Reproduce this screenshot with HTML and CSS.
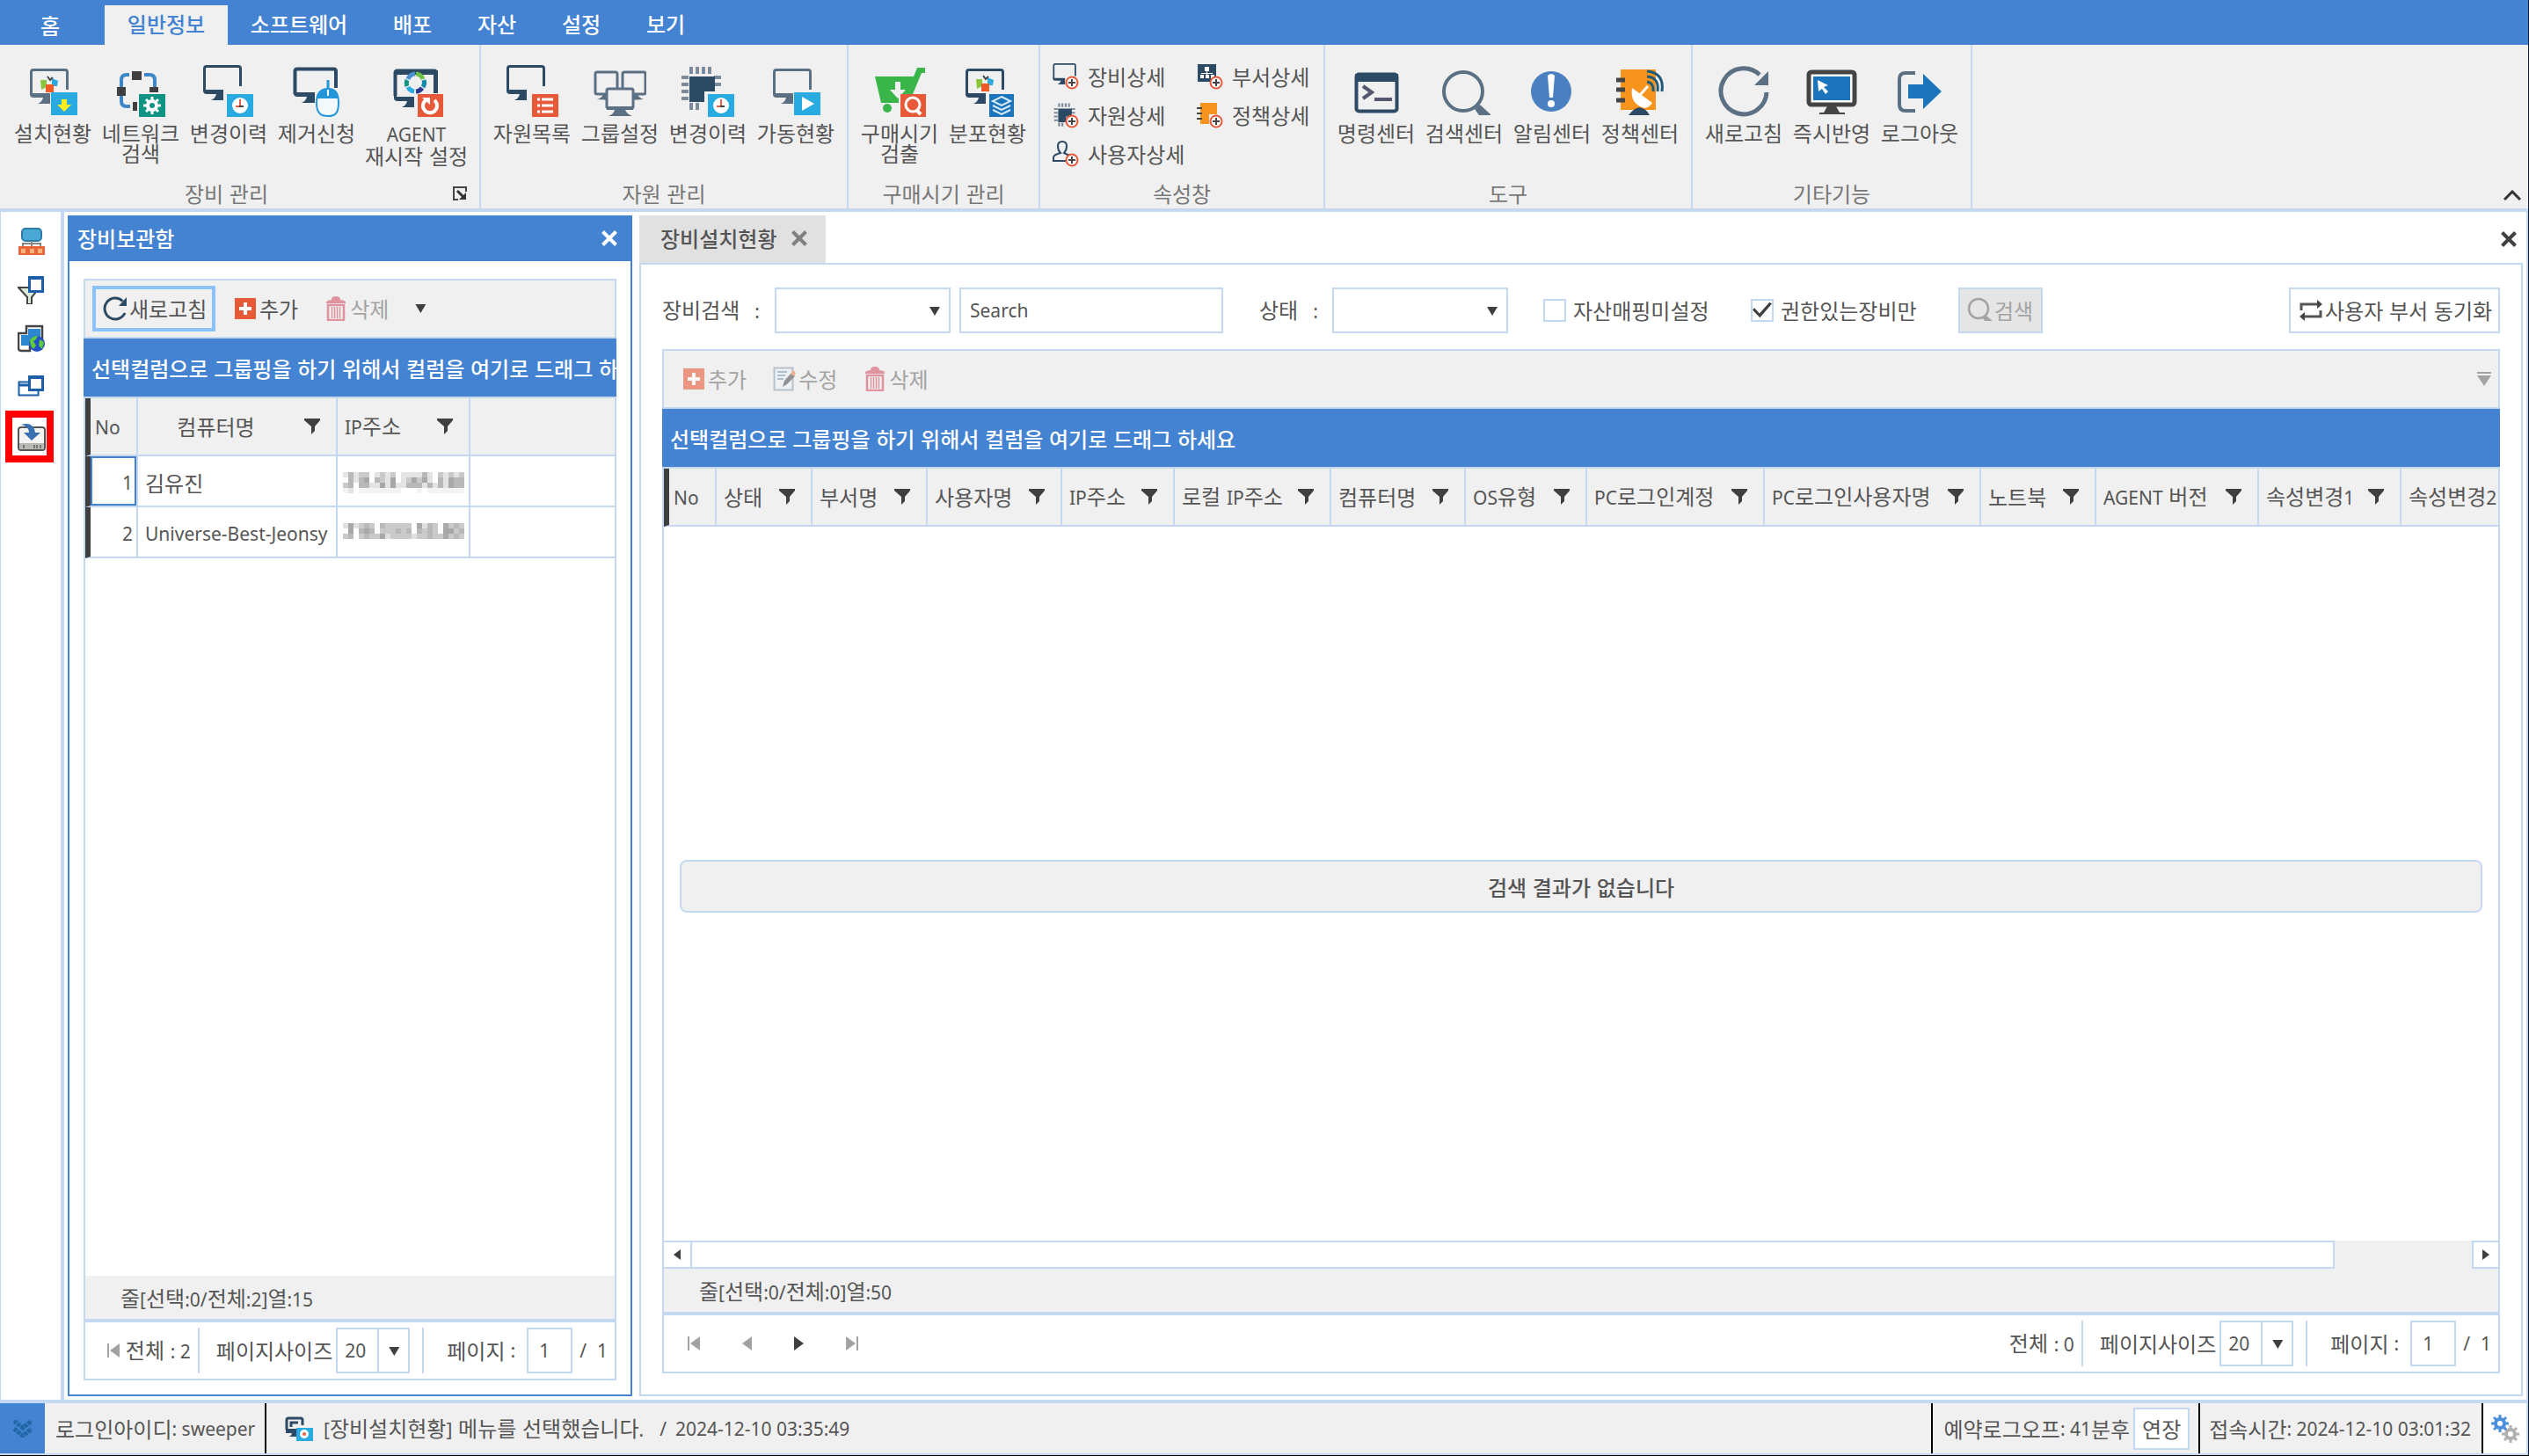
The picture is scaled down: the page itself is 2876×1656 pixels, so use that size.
FILE: index.html
```html
<!DOCTYPE html>
<html lang="ko">
<head>
<meta charset="utf-8">
<title>장비설치현황</title>
<link rel="stylesheet" href="styles.css">
</head>
<body>
<svg class="defs" aria-hidden="true">
  <symbol id="monitor" viewBox="0 0 60 60">
    <path d="M46.500 29V9q0-2.500-2.500-2.500H8Q5.500 6.500 5.500 9v26" fill="none" stroke="currentColor" stroke-width="3"/>
    <path d="M4 33h23v12H13q5-2 6-7H8q-4 0-4-4z" fill="currentColor"/>
  </symbol>
  <symbol id="clock" viewBox="0 0 30 26">
    <path d="M0 0h30v26H0z" fill="#29abe2"/><circle cx="15" cy="13" r="9" fill="#fff"/>
    <path d="M15 6v8M10 14h5" stroke="#e6604a" stroke-width="2"/><path d="M14 14h5" stroke="#444" stroke-width="2"/>
  </symbol>
  <symbol id="tiles" viewBox="0 0 24 22">
    <path d="M2 6h7v8l-6 3z" fill="#8cc63f"/><path d="M15 4l7 3-1 6h-6z" fill="#29abe2"/><path d="M8 11h9v9H8z" fill="#f15a24"/><path d="M10 2l3 4 3-3" fill="none" stroke="#444" stroke-width="2"/>
  </symbol>
  <symbol id="chip" viewBox="0 0 60 60">
    <path d="M14 3v8M21 3v8M28 3v8M35 3v8M14 44v8M21 44v8M3 15h8M3 23h8M3 31h8M3 39h8M40 15h8M40 23h8" stroke="#7b8b9b" stroke-width="4"/>
    <path d="M12 14h29v17H29v12H12z" fill="#2c4a63"/>
  </symbol>
  <symbol id="plus-mark" viewBox="0 0 16 16">
    <circle cx="8" cy="8" r="6.500" fill="#fff" stroke="#e8593a" stroke-width="2"/><path d="M8 4v8M4 8h8" stroke="#444" stroke-width="2"/>
  </symbol>
  <symbol id="refresh" viewBox="0 0 30 30">
    <path d="M26 20a12 12 0 1 1-2.500-13.500" fill="none" stroke="currentColor" stroke-width="3"/><path d="M28 2v10h-9z" fill="currentColor"/>
  </symbol>
  <symbol id="add" viewBox="0 0 26 26"><path d="M1 1h24v24H1z" fill="#e8593a"/><path d="M13 6v14M6 13h14" stroke="#fff" stroke-width="4"/></symbol>
  <symbol id="trash" viewBox="0 0 26 28">
    <path d="M2 8V6q3-2 6-2 0-4 5-4t5 4q3 0 6 2v2z" fill="#d4576a"/><path d="M4 10h18v17H4z" fill="none" stroke="#d4576a" stroke-width="2.500"/><path d="M8.500 12v13M11.500 12v13M14.500 12v13M17.500 12v13" stroke="#d4576a" stroke-width="1.500"/>
  </symbol>
  <symbol id="edit" viewBox="0 0 26 28">
    <path d="M1.500 1.500h21v25h-21z" fill="#eef3f7" stroke="#8fa3b3" stroke-width="2"/><path d="M5 6h11M5 10h9M5 14h7" stroke="#7d9db8" stroke-width="2"/><path d="M11 23l2-7 8-9 4 4-9 9z" fill="#555"/><path d="M20 8l3-4 3 3-2 4z" fill="#e8874a"/>
  </symbol>
  <symbol id="funnel" viewBox="0 0 18 18"><path d="M0 0h18v2l-6 7v5l-4 4V9L0 2z" fill="#3f3f3f"/></symbol>
  <symbol id="lens" viewBox="0 0 30 30"><circle cx="13" cy="13" r="11" fill="none" stroke="currentColor" stroke-width="2.500"/><path d="M18 24l4-3 7 6h-9z" fill="currentColor"/></symbol>
  <symbol id="cross" viewBox="0 0 20 20"><path d="M2.500 2.500l15 15M17.500 2.500l-15 15" stroke="currentColor" stroke-width="4"/></symbol>
  <symbol id="first" viewBox="0 0 14 16"><path d="M1 0v16" stroke="currentColor" stroke-width="2"/><path d="M14 0v16L3 8z" fill="currentColor"/></symbol>
  <symbol id="gear" viewBox="0 0 20 20">
    <circle cx="10" cy="10" r="5" fill="none" stroke="currentColor" stroke-width="4"/><path d="M10 0v4M10 16v4M0 10h4M16 10h4M3 3l3 3M14 14l3 3M3 17l3-3M14 6l3-3" stroke="currentColor" stroke-width="3"/>
  </symbol>
</svg>

<div class="app">
  <nav class="tabs">
    <button class="tab home">홈</button>
    <button class="tab active">일반정보</button>
    <button class="tab wide">소프트웨어</button>
    <button class="tab">배포</button>
    <button class="tab">자산</button>
    <button class="tab">설정</button>
    <button class="tab">보기</button>
  </nav>

  <div class="ribbon">
    <section class="group">
      <div class="tools">
        <button class="tool"><svg class="big slate" viewBox="0 0 60 60"><use href="#monitor"/><use href="#tiles" x="14" y="12" width="24" height="22"/><path d="M28 32h30v26H28z" fill="#29abe2"/><path d="M40 40h6v6h5l-8 8-8-8h5z" fill="#fcee21"/></svg><span>설치현황</span></button>
        <button class="tool"><svg class="big" viewBox="0 0 60 60"><path d="M17 12h-3q-6 0-6 6v24q0 6 6 6h4M34 12h6q6 0 6 6v10" fill="none" stroke="#3c87c8" stroke-width="4"/><path d="M20 8h11v10H20zM3 26h10v10H3zM40 26h10v6H40zM21 43h5v10h-5z" fill="#404040"/><path d="M28 34h30v26H28z" fill="#0f9384"/><use href="#gear" x="33" y="37" width="20" height="20" color="#fff"/></svg><span>네트워크<br>검색</span></button>
        <button class="tool"><svg class="big navy" viewBox="0 0 60 60"><use href="#monitor" x="-3" y="-4"/><use href="#clock" x="28" y="34" width="30" height="26"/></svg><span>변경이력</span></button>
        <button class="tool"><svg class="big navy" viewBox="0 0 60 60"><path d="M52 27V8q0-2.500-2.500-2.500H8Q5.500 5.500 5.500 8v26" fill="none" stroke="currentColor" stroke-width="4"/><path d="M4 32h24v12H13q5-2 6-7H8q-4 0-4-4z" fill="currentColor"/><path d="M30 44c0-12 5-16 13-16s12 4 12 16-4 15-12 15-13-3-13-15z" fill="#f4f9fc" stroke="#2396d9" stroke-width="2"/><path d="M30 39c1-8 6-11 13-11s11 4 12 11z" fill="#2396d9"/><path d="M43 18v10" stroke="#2396d9" stroke-width="3"/><path d="M43 29v7" stroke="#fff" stroke-width="2"/></svg><span>제거신청</span></button>
        <button class="tool long"><svg class="big navy" viewBox="0 0 60 60"><path d="M52 32V10q0-2.500-2.500-2.500H8Q5.500 7.500 5.500 10v26" fill="none" stroke="currentColor" stroke-width="4"/><use href="#monitor" y="4"/><path d="M40 7h14v26h-5V12h-9z" fill="currentColor"/><path d="M8 12h40v22H8z" fill="#f0f0f0"/><g fill="none" stroke-width="5"><path d="M20 17a9 9 0 0 1 8-6" stroke="#4a90d0"/><path d="M29 11a9 9 0 0 1 8 6" stroke="#6cbf45"/><path d="M38 18a9 9 0 0 1-1 8" stroke="#0f8ba8"/><path d="M36 27a9 9 0 0 1-7 4" stroke="#2b3990"/><path d="M27 31a9 9 0 0 1-7-5" stroke="#29abe2"/><path d="M19 25a9 9 0 0 1 0-7" stroke="#0f9384"/></g><path d="M31 34h29v26H31z" fill="#e8593a"/><path d="M40 41a8 8 0 1 0 10 0" fill="none" stroke="#fff" stroke-width="4"/><path d="M36 38h9v8z" fill="#fff"/></svg><span><span class="en">AGENT</span><br>재시작 설정</span></button>
      </div>
      <div class="caption"><span>장비 관리</span><button class="launch" aria-label="장비 관리 옵션"><svg viewBox="0 0 16 16"><path d="M6 15H1V1h14v5" fill="none" stroke="#444" stroke-width="2"/><path d="M5 5l7 7" stroke="#333" stroke-width="3"/><path d="M15 7v8H7z" fill="#333"/></svg></button></div>
    </section>
    <section class="group">
      <div class="tools">
        <button class="tool"><svg class="big navy" viewBox="0 0 60 60"><use href="#monitor" x="-3" y="-4"/><path d="M30 34h30v26H30z" fill="#e8593a"/><path d="M36 40h3M36 47h3M36 54h3M41 40h13M41 47h13M41 54h13" stroke="#fff" stroke-width="3"/></svg><span>자원목록</span></button>
        <button class="tool"><svg class="big slate" viewBox="0 0 60 60"><g fill="#f0f0f0" stroke="currentColor" stroke-width="3"><rect x="2" y="9" width="25" height="25" rx="2"/><rect x="33" y="9" width="26" height="25" rx="2"/></g><path d="M4 40q6-2 7-6h8v7zM57 40q-6-2-7-6h-8v7z" fill="currentColor"/><rect x="15" y="28" width="30" height="22" rx="2" fill="#f0f0f0" stroke="currentColor" stroke-width="3"/><path d="M15 48h30v4h-9q2 5 8 7H17q6-2 7-7h-9z" fill="currentColor"/></svg><span>그룹설정</span></button>
        <button class="tool"><svg class="big" viewBox="0 0 60 60"><use href="#chip" x="-3"/><use href="#clock" x="30" y="34" width="30" height="26"/></svg><span>변경이력</span></button>
        <button class="tool"><svg class="big slate" viewBox="0 0 60 60"><use href="#monitor"/><path d="M28 32h30v26H28z" fill="#29abe2"/><path d="M37 37l14 8-14 8z" fill="#fff"/></svg><span>가동현황</span></button>
      </div>
      <div class="caption"><span>자원 관리</span></div>
    </section>
    <section class="group">
      <div class="tools">
        <button class="tool"><svg class="big" viewBox="0 0 60 60"><path d="M2 14h44l4-10h9v6h-4L45 34H29v10H9z" fill="#39b54a"/><path d="M25 20h6v9h6l-9 10-9-10h6z" fill="#f0f0f0"/><circle cx="16" cy="50" r="5" fill="#39b54a"/><path d="M31 34h29v26H31z" fill="#e8593a"/><circle cx="45" cy="46" r="8" fill="none" stroke="#fff" stroke-width="3"/><path d="M49 52l5 5" stroke="#fff" stroke-width="4"/></svg><span>구매시기<br>검출</span></button>
        <button class="tool"><svg class="big navy" viewBox="0 0 60 60"><use href="#monitor" x="1"/><use href="#tiles" x="15" y="11" width="24" height="22"/><path d="M32 34h28v26H32z" fill="#1c75bc"/><path d="M46 37l10 5-10 5-10-5zM36 47l10 5 10-5M36 52l10 5 10-5" fill="none" stroke="#d8ecfa" stroke-width="2"/></svg><span>분포현황</span></button>
      </div>
      <div class="caption"><span>구매시기 관리</span></div>
    </section>
    <section class="group details">
      <div class="links">
        <button class="link"><svg viewBox="0 0 30 30"><use href="#monitor" class="navy" width="36" height="36" x="-2" y="-3"/><use href="#plus-mark" x="14" y="14" width="16" height="16"/></svg>장비상세</button>
        <button class="link"><svg viewBox="0 0 30 30"><path d="M1 1h21v20H1z" fill="#2c4a63"/><path d="M9 4h5v5H9zM4 13h4v4H4zM10 13h4v4h-4zM16 13h4v4h-4zM11 9h1v4h-1zM5 11h13v1H5z" fill="#fff"/><use href="#plus-mark" x="14" y="14" width="16" height="16"/></svg>부서상세</button>
        <button class="link"><svg viewBox="0 0 30 30"><use href="#chip" width="32" height="32"/><use href="#plus-mark" x="14" y="14" width="16" height="16"/></svg>자원상세</button>
        <button class="link"><svg viewBox="0 0 30 30"><path d="M4 1h19v13h-9v11H4z" fill="#f7941e"/><path d="M0 7h6M0 13h6M0 19h6" stroke="#444" stroke-width="2"/><use href="#plus-mark" x="14" y="14" width="16" height="16"/></svg>정책상세</button>
        <button class="link"><svg viewBox="0 0 30 30"><path d="M20 23H1v-4q0-3 8-5-3-3-3-8 0-5 5-5t5 5q0 5-3 8l6 3" fill="none" stroke="#2c4a63" stroke-width="2"/><use href="#plus-mark" x="14" y="14" width="16" height="16"/></svg>사용자상세</button>
      </div>
      <div class="caption"><span>속성창</span></div>
    </section>
    <section class="group">
      <div class="tools">
        <button class="tool"><svg class="big" viewBox="0 0 60 60"><rect x="7.500" y="11.500" width="46" height="42" rx="3" fill="none" stroke="#2c4a63" stroke-width="4"/><path d="M6 11h49v9H6z" fill="#2c4a63"/><path d="M15 25l10 7-10 7" fill="none" stroke="#55566f" stroke-width="4"/><path d="M28 40h20" stroke="#55566f" stroke-width="4"/></svg><span>명령센터</span></button>
        <button class="tool"><svg class="big slate" viewBox="0 0 60 60"><circle cx="29" cy="31" r="22" fill="none" stroke="currentColor" stroke-width="4"/><path d="M42 51l6-5 13 12H47z" fill="currentColor"/></svg><span>검색센터</span></button>
        <button class="tool"><svg class="big" viewBox="0 0 60 60"><circle cx="29" cy="31" r="23" fill="#4a7fc1"/><path d="M25 13q4-4 8 0l-2 25h-4z" fill="#fff"/><circle cx="29" cy="45" r="4" fill="#fff"/></svg><span>알림센터</span></button>
        <button class="tool"><svg class="big" viewBox="0 0 60 60"><path d="M8 6h40v46H8z" fill="#f7941e"/><path d="M3 18h10M3 29h10M3 41h10" stroke="#444" stroke-width="5"/><path d="M21 27q-3 18 14 23 6-1 9-6z" fill="#fff"/><path d="M30 35l9-10" stroke="#fff" stroke-width="3"/><path d="M17 58q6-8 12-9 8 1 12 9z" fill="#2c4a63"/><path d="M38 20q8 1 7 11M38 14q14 1 12 17M38 8q20 2 17 23" fill="none" stroke="#1f5a78" stroke-width="3"/></svg><span>정책센터</span></button>
      </div>
      <div class="caption"><span>도구</span></div>
    </section>
    <section class="group">
      <div class="tools">
        <button class="tool"><svg class="big slate" viewBox="0 0 60 60"><path d="M56 32A26 26 0 1 1 48 12" fill="none" stroke="currentColor" stroke-width="5"/><path d="M58 8v16H42z" fill="currentColor"/></svg><span>새로고침</span></button>
        <button class="tool"><svg class="big" viewBox="0 0 60 60"><rect x="4" y="9" width="52" height="37" rx="3" fill="#fff" stroke="#444" stroke-width="5"/><path d="M9 14h42v27H9z" fill="#1c75bc"/><path d="M14 18l12 6-5 2 5 5-3 3-4-6-4 3z" fill="#fff"/><path d="M25 48h10l4 7h6v2H16v-2h5z" fill="#444"/></svg><span>즉시반영</span></button>
        <button class="tool"><svg class="big slate" viewBox="0 0 60 60"><path d="M25 10H14q-7 0-7 7v29q0 7 7 7h11" fill="none" stroke="currentColor" stroke-width="4"/><path d="M17 23h17V11l21 20-21 20V39H17z" fill="#1c75bc"/></svg><span>로그아웃</span></button>
      </div>
      <div class="caption"><span>기타기능</span></div>
    </section>
    <button class="fold" aria-label="리본 접기"><svg viewBox="0 0 20 12"><path d="M1 11l9-9 9 9" fill="none" stroke="#333" stroke-width="3"/></svg></button>
  </div>

  <div class="work">
    <aside class="rail">
      <button aria-label="부서 트리"><svg viewBox="0 0 32 32"><rect x="5" y="1" width="22" height="14" rx="4" fill="#4aa8d4" stroke="#2c7ca8" stroke-width="2"/><path d="M16 15v6M6 21v-3h20v3" fill="none" stroke="#888" stroke-width="2"/><path d="M1 21h30v10H1z" fill="#e8653a"/><path d="M4 24h5v5H4zM14 24h5v5h-5zM23 24h5v5h-5z" fill="#f9b27c"/></svg></button>
      <button aria-label="필터"><svg viewBox="0 0 32 32"><path d="M1 13h24l-9 11v8h-5v-8z" fill="#dcebdc" stroke="#444" stroke-width="2"/><path d="M13.500 1.500h15v16h-15z" fill="#fff" stroke="#1c5fa8" stroke-width="3"/><path d="M12 0h18v4H12z" fill="#1c5fa8"/></svg></button>
      <button aria-label="네트워크"><svg viewBox="0 0 32 32"><path d="M10 2h18v20H14v8H4q-3 0-3-3V10h9z" fill="#fff" stroke="#444" stroke-width="2.500"/><path d="M12 5h14v10H12zM4 12h16v12H4z" fill="#2c86d0"/><circle cx="22" cy="22" r="9" fill="#2350c8"/><path d="M14 18q3-5 9-5-2 5-5 6l3 5-3 4q-4-3-4-10zM25 17l5 3-2 8-4-4z" fill="#5fca3a"/></svg></button>
      <button aria-label="창"><svg viewBox="0 0 32 32"><path d="M1.500 10.500h22v15h-22z" fill="#fff" stroke="#1c5fa8" stroke-width="2"/><path d="M1 14h12" stroke="#1c5fa8" stroke-width="3"/><path d="M13.500 4.500h15v15h-15z" fill="#fff" stroke="#1c5fa8" stroke-width="3"/><path d="M12 3h18v4H12z" fill="#1c5fa8"/></svg></button>
      <button class="marked" aria-label="장비보관함"><svg viewBox="0 0 32 32"><rect x="1" y="5" width="30" height="26" rx="3" fill="#f4f4f2" stroke="#555" stroke-width="2"/><path d="M2 23h28v7H2z" fill="#b8b8b4"/><path d="M7 25v4M19 25v4M22 25v4M26 25v4" stroke="#777" stroke-width="2"/><path d="M4 2q14-4 16 9h6L16 20 7 11h6Q13 4 4 2z" fill="#3a70b0"/></svg></button>
    </aside>

    <section class="side">
      <header class="side-head"><h2>장비보관함</h2><button aria-label="닫기"><svg viewBox="0 0 20 20"><use href="#cross"/></svg></button></header>
      <div class="side-body">
        <div class="bar">
          <button class="act focus"><svg class="navy" viewBox="0 0 30 30"><use href="#refresh"/></svg>새로고침</button>
          <button class="act"><svg viewBox="0 0 26 26"><use href="#add"/></svg>추가</button>
          <button class="act" disabled><svg viewBox="0 0 26 28"><use href="#trash"/></svg>삭제</button>
          <button class="more" aria-label="더보기"><i class="down"></i></button>
        </div>
        <div class="drop">선택컬럼으로 그룹핑을 하기 위해서 컬럼을 여기로 드래그 하세요</div>
        <div class="grid">
          <table>
            <colgroup><col class="w60"><col class="w227"><col class="w151"><col></colgroup>
            <thead><tr>
              <th class="no"><span class="en">No</span></th>
              <th><div class="hd mid"><span>컴퓨터명</span><svg><use href="#funnel"/></svg></div></th>
              <th><div class="hd"><span><span class="en">IP</span>주소</span><svg><use href="#funnel"/></svg></div></th>
              <th></th>
            </tr></thead>
            <tbody>
              <tr><td class="no sel en">1</td><td>김유진</td><td><svg class="mosaic" viewBox="0 0 23 4"><path stroke="#e4e4e4" d="M0 .5h1M2 .5h1M6 .5h1M8 .5h1M11 .5h4M16 .5h1M19 .5h1M21 .5h1M2 1.500h1M8 1.500h1M11 1.500h1M16 1.500h1M19 1.500h1M5 2.500h2M8 2.500h1M10 2.500h2M15 2.500h1M17 2.500h1M19 2.500h1M1 3.500h1"/><path stroke="#f3f3f3" d="M0 3.500h1M3 3.500h8M14 3.500h1M16 3.500h7"/><path stroke="#cacaca" d="M3 .5h2M7 .5h1M9 .5h1M18 .5h1M20 .5h1M22 .5h1M7 1.500h1M12 1.500h1M14 1.500h1M0 2.500h1"/><path stroke="#b8b8b8" d="M1 .5h1M15 .5h1M1 1.500h1M3 1.500h1M6 1.500h1M18 1.500h1M21 1.500h2M1 2.500h1M3 2.500h2M12 2.500h3M16 2.500h1M18 2.500h1M21 2.500h2"/><path stroke="#a8a8a8" d="M4 1.500h1M9 1.500h1M13 1.500h1M15 1.500h1M20 1.500h1M7 2.500h1M9 2.500h1M20 2.500h1"/></svg></td><td></td></tr>
              <tr><td class="no en">2</td><td class="en">Universe-Best-Jeonsy</td><td><svg class="mosaic" viewBox="0 0 23 4"><path stroke="#e0e0e0" d="M0 .5h1M2 .5h1M15 .5h1M8 2.500h1M13 2.500h1"/><path stroke="#cacaca" d="M3 .5h1M5 .5h1M8 .5h5M17 .5h1M20 .5h1M22 .5h1M7 1.500h3M11 1.500h1M15 1.500h1M17 1.500h1M21 1.500h1M0 2.500h1M3 2.500h1M5 2.500h2M9 2.500h4M14 2.500h2M17 2.500h2M20 2.500h1M22 2.500h1"/><path stroke="#b8b8b8" d="M4 .5h1M7 .5h1M16 .5h1M21 .5h1M3 1.500h1M5 1.500h1M10 1.500h1M12 1.500h1M14 1.500h1M16 1.500h1M22 1.500h1M1 2.500h1M4 2.500h1M16 2.500h1M21 2.500h1"/><path stroke="#a8a8a8" d="M1 .5h1M14 .5h1M19 .5h1M1 1.500h1M4 1.500h1M19 1.500h2M7 2.500h1M19 2.500h1"/></svg></td><td></td></tr>
            </tbody>
          </table>
        </div>
        <div class="summary">줄<span class="en">[</span>선택<span class="en">:0/</span>전체<span class="en">:2]</span>열<span class="en">:15</span></div>
        <div class="pager compact">
          <button class="step" disabled aria-label="처음"><svg viewBox="0 0 14 16"><use href="#first"/></svg></button>
          <span class="total">전체 <span class="en">: 2</span></span>
          <label class="size">페이지사이즈<span class="combo small"><select class="en"><option>20</option></select><i class="down"></i></span></label>
          <label class="page">페이지 <span class="en">:</span><input class="en" value="1"></label>
          <span class="of en">/</span><span class="en">1</span>
        </div>
      </div>
    </section>

    <main class="main">
      <div class="doc-tabs">
        <div class="doc-tab">장비설치현황<button aria-label="탭 닫기"><svg viewBox="0 0 20 20"><use href="#cross"/></svg></button></div>
        <button class="close" aria-label="닫기"><svg viewBox="0 0 20 20"><use href="#cross"/></svg></button>
      </div>
      <div class="doc">
        <form class="filters">
          <label class="name" for="kind">장비검색<span class="en">:</span></label>
          <span class="combo"><select id="kind"><option></option></select><i class="down"></i></span>
          <input class="search en" aria-label="Search" placeholder="Search">
          <label class="name state" for="state">상태<span class="en">:</span></label>
          <span class="combo"><select id="state"><option></option></select><i class="down"></i></span>
          <label class="check"><input type="checkbox">자산매핑미설정</label>
          <label class="check"><input type="checkbox" checked>권한있는장비만</label>
          <button class="box find" type="button" disabled><svg viewBox="0 0 30 30"><use href="#lens"/></svg>검색</button>
          <button class="box sync" type="button"><svg viewBox="0 0 26 24"><path d="M2 12V5h18M24 12v7H6" fill="none" stroke="#555" stroke-width="3"/><path d="M20 0l6 5-6 5zM6 14l-6 5 6 5z" fill="#444"/></svg>사용자 부서 동기화</button>
        </form>
        <div class="bar roomy">
          <button class="act" disabled><svg viewBox="0 0 26 26"><use href="#add"/></svg>추가</button>
          <button class="act" disabled><svg viewBox="0 0 26 28"><use href="#edit"/></svg>수정</button>
          <button class="act" disabled><svg viewBox="0 0 26 28"><use href="#trash"/></svg>삭제</button>
          <button class="overflow" aria-label="도구 더보기"><svg viewBox="0 0 16 16"><path d="M0 0h16v2H0zM0 4h16l-8 12z" fill="#a3a3a3"/></svg></button>
        </div>
        <div class="drop">선택컬럼으로 그룹핑을 하기 위해서 컬럼을 여기로 드래그 하세요</div>
        <div class="grid">
          <table>
            <colgroup><col class="w60"><col class="w109"><col class="w131"><col class="w153"><col class="w128"><col class="w178"><col class="w153"><col class="w138"><col class="w202"><col class="w246"><col class="w131"><col class="w185"><col class="w162"><col></colgroup>
            <thead><tr>
              <th class="no"><span class="en">No</span></th>
              <th><div class="hd"><span>상태</span><svg><use href="#funnel"/></svg></div></th>
              <th><div class="hd"><span>부서명</span><svg><use href="#funnel"/></svg></div></th>
              <th><div class="hd"><span>사용자명</span><svg><use href="#funnel"/></svg></div></th>
              <th><div class="hd"><span><span class="en">IP</span>주소</span><svg><use href="#funnel"/></svg></div></th>
              <th><div class="hd"><span>로컬 <span class="en">IP</span>주소</span><svg><use href="#funnel"/></svg></div></th>
              <th><div class="hd"><span>컴퓨터명</span><svg><use href="#funnel"/></svg></div></th>
              <th><div class="hd"><span><span class="en">OS</span>유형</span><svg><use href="#funnel"/></svg></div></th>
              <th><div class="hd"><span><span class="en">PC</span>로그인계정</span><svg><use href="#funnel"/></svg></div></th>
              <th><div class="hd"><span><span class="en">PC</span>로그인사용자명</span><svg><use href="#funnel"/></svg></div></th>
              <th><div class="hd"><span>노트북</span><svg><use href="#funnel"/></svg></div></th>
              <th><div class="hd"><span><span class="en">AGENT</span> 버전</span><svg><use href="#funnel"/></svg></div></th>
              <th><div class="hd"><span>속성변경<span class="en">1</span></span><svg><use href="#funnel"/></svg></div></th>
              <th class="cut"><div class="hd"><span>속성변경<span class="en">2</span></span></div></th>
            </tr></thead>
          </table>
          <p class="empty">검색 결과가 없습니다</p>
        </div>
        <div class="scroll"><button aria-label="왼쪽"><i class="left"></i></button><div class="track"><div class="thumb"></div></div><button aria-label="오른쪽"><i class="right"></i></button></div>
        <div class="summary">줄<span class="en">[</span>선택<span class="en">:0/</span>전체<span class="en">:0]</span>열<span class="en">:50</span></div>
        <div class="pager">
          <div class="steps">
            <button class="step" disabled aria-label="처음"><svg viewBox="0 0 14 16"><use href="#first"/></svg></button>
            <button class="step" disabled aria-label="이전"><svg viewBox="0 0 14 16"><path d="M13 0v16L2 8z" fill="currentColor"/></svg></button>
            <button class="step" aria-label="다음"><svg viewBox="0 0 14 16"><path d="M1 0v16l11-8z" fill="currentColor"/></svg></button>
            <button class="step" disabled aria-label="마지막"><svg viewBox="0 0 14 16"><path d="M13 0v16" stroke="currentColor" stroke-width="2"/><path d="M0 0v16l11-8z" fill="currentColor"/></svg></button>
          </div>
          <span class="total">전체 <span class="en">: 0</span></span>
          <label class="size">페이지사이즈<span class="combo small"><select class="en"><option>20</option></select><i class="down"></i></span></label>
          <label class="page">페이지 <span class="en">:</span><input class="en" value="1"></label>
          <span class="of en">/</span><span class="en">1</span>
        </div>
      </div>
    </main>
  </div>

  <footer class="status">
    <button class="start" aria-label="메뉴"><svg viewBox="0 0 22 20"><path d="M1 1l10 8L21 1M1 10l10 8 10-8" fill="none" stroke="#1f67a5" stroke-width="5" stroke-dasharray="4 1"/></svg></button>
    <div class="cell user">로그인아이디<span class="en">: sweeper</span></div>
    <div class="cell msg"><svg class="navy" viewBox="0 0 32 28"><path d="M2 15V4q0-2 2-2h14q2 0 2 2v6M7 12V7h8" fill="none" stroke="currentColor" stroke-width="3"/><path d="M1 14h12v9H5q3-2 3-4H1z" fill="currentColor"/><path d="M13 13h19v15H13z" fill="#29abe2"/><circle cx="22" cy="20" r="5" fill="#fff"/><circle cx="22" cy="20" r="2" fill="#e6604a"/></svg><span><span class="en">[</span>장비설치현황<span class="en">]</span> 메뉴를 선택했습니다<span class="en">.</span></span><span class="en slash">/</span><span class="en">2024-12-10 03:35:49</span></div>
    <div class="cell logoff">예약로그오프<span class="en">: 41</span>분후<button class="extend">연장</button></div>
    <div class="cell time">접속시간<span class="en">: 2024-12-10 03:01:32</span></div>
    <button class="settings" aria-label="설정"><svg viewBox="0 0 32 32"><use href="#gear" x="12" y="12" width="20" height="20" color="#b0b0b0"/><use href="#gear" x="0" y="0" width="20" height="20" color="#4a90dc"/></svg></button>
  </footer>
</div>
</body>
</html>
```
FILE: styles.css
```css
:root {
  --blue: #4483d1;
  --line: #c5d8f1;
  --gray: #f0f0f0;
  --text: #555;
}
* { box-sizing: border-box; }
body {
  margin: 0;
  background: #fff;
  color: var(--text);
  font: 24px/30px "Noto Sans CJK KR", sans-serif;
}
button, input, select { font: inherit; color: inherit; margin: 0; padding: 0; border: 0; background: none; border-radius: 0; }
button { cursor: pointer; white-space: nowrap; }
svg { display: block; flex: none; }
.en, input.en, select.en { font-family: "Noto Sans", "Noto Sans CJK KR", sans-serif; font-size: 21px; }
.defs { display: none; }
.navy { color: #2c4a63; }
.slate { color: #5b7083; }

.app { display: flex; flex-direction: column; min-height: 100vh; border-right: 1px solid #0b1a33; border-bottom: 1px solid #000; }

/* top tabs */
.tabs { display: flex; height: 51px; background: var(--blue); padding-top: 6px; }
.tab { width: 96px; color: #fff; font-weight: 500; padding-bottom: 4px; }
.tab.home { width: 119px; padding: 0 5px 0 0; }
.tab.active { width: 140px; background: var(--gray); color: var(--blue); }
.tab.wide { width: 162px; }

/* ribbon */
.ribbon { display: flex; height: 190px; background: var(--gray); border-bottom: 4px solid var(--line); }
.group { display: flex; flex-direction: column; border-right: 2px solid var(--line); }
.tools { flex: 1; display: flex; padding: 22px 8px 0; }
.tool { width: 100px; display: flex; flex-direction: column; align-items: center; line-height: 23px; }
.tool.long { width: 127px; }
.group:first-child .tools { padding-left: 10px; }
.big { width: 60px; height: 60px; margin-bottom: 6px; }
.caption { display: flex; align-items: center; height: 32px; padding-bottom: 2px; color: #777; }
.caption span { flex: 1; text-align: center; }
.launch { width: 16px; height: 16px; margin-right: 14px; }
.links { flex: 1; display: grid; grid-template: repeat(3, 44px) / 164px 144px; padding: 14px 0 0 14px; }
.link { display: flex; align-items: center; gap: 10px; }
.link svg { width: 30px; height: 30px; }
.fold { margin: auto 8px 8px auto; width: 20px; height: 14px; }

/* work area */
.work { flex: 1; display: flex; border: solid var(--line); border-width: 0 2px 0 1px; padding-right: 4px; }
.rail { width: 72px; flex: none; display: flex; flex-direction: column; border-right: 4px solid var(--line); padding: 6px 0 0 5px; }
.rail button { width: 55px; height: 55px; padding-left: 4px; display: flex; align-items: center; justify-content: center; }
.rail button svg { width: 32px; height: 32px; }
.rail .marked { height: 59px; border: 8px solid #f00; }

.side { width: 642px; margin: 4px; display: flex; flex-direction: column; border: 2px solid var(--blue); flex: none; }
.side-head { height: 50px; display: flex; justify-content: space-between; align-items: center; padding: 0 14px 2px 9px; background: var(--blue); color: #fff; }
.side-head h2 { margin: 0; font-size: 24px; font-weight: 500; }
.side-head svg, .close svg { width: 20px; height: 20px; }
.side-body { flex: 1; display: flex; flex-direction: column; padding: 20px 16px 16px; }

.bar { display: flex; align-items: center; height: 68px; border: 2px solid var(--line); background: var(--gray); padding-left: 8px; }
.act { display: flex; align-items: center; gap: 3px; margin-right: 30px; }
.act svg { width: 26px; height: 28px; }
.act:disabled { color: #a3a3a3; }
.act:disabled svg { opacity: .6; }
.act.focus { width: 140px; height: 52px; border: 4px solid #8cc2fb; padding-left: 7px; margin-right: 21px; gap: 1px; }
.act.focus svg { width: 30px; height: 30px; }
.bar.roomy { padding-left: 21px; }
.overflow { width: 16px; height: 16px; margin-left: auto; margin-right: 8px; }
.down, .left, .right { display: block; background: #3f3f3f; }
.down { width: 12px; height: 10px; clip-path: polygon(0 0, 100% 0, 50% 100%); }
.left { width: 8px; height: 12px; clip-path: polygon(100% 0, 100% 100%, 0 50%); }
.right { width: 8px; height: 12px; clip-path: polygon(0 0, 100% 50%, 0 100%); }

.drop { height: 66px; line-height: 68px; padding: 0 9px; background: var(--blue); color: #fff; font-weight: 500; white-space: nowrap; overflow: hidden; }
.grid { flex: 1; display: flex; flex-direction: column; border: 2px solid var(--line); border-bottom: 0; }
table { width: 100%; table-layout: fixed; border-collapse: separate; border-spacing: 0; margin-bottom: 6px; }
th, td { padding: 0; border: solid var(--line); border-width: 0 2px 2px 0; font-weight: 400; text-align: left; white-space: nowrap; overflow: hidden; }
th { height: 66px; background: var(--gray); }
th:last-child, td:last-child { border-right: 0; }
td { height: 58px; padding: 3px 0 0 8px; }
.no { border-left: 6px solid #3f3f3f; }
th.no { padding-left: 5px; }
td.no { text-align: right; padding-right: 4px; }
.sel { box-shadow: inset 0 0 0 2px var(--blue); }
.hd { display: flex; align-items: center; justify-content: space-between; padding: 0 18px 0 8px; }
.hd svg { width: 18px; height: 18px; }
.hd.mid { padding-left: 0; gap: 12px; }
.hd.mid > span { flex: 1; text-align: center; }
.cut .hd { padding-right: 0; }
.mosaic { width: 138px; height: 24px; margin-left: -2px; fill: none; shape-rendering: crispEdges; }
.w60 { width: 60px; }
.w109 { width: 109px; }
.w128 { width: 128px; }
.w131 { width: 131px; }
.w138 { width: 138px; }
.w151 { width: 151px; }
.w153 { width: 153px; }
.w162 { width: 162px; }
.w178 { width: 178px; }
.w185 { width: 185px; }
.w202 { width: 202px; }
.w227 { width: 227px; }
.w246 { width: 246px; }

.summary { height: 53px; line-height: 49px; padding-left: 40px; background: var(--gray); border: solid var(--line); border-width: 0 2px 4px; }
.pager { display: flex; align-items: center; justify-content: flex-end; height: 66px; border: 2px solid var(--line); border-top: 0; padding-right: 8px; white-space: nowrap; }
.step { flex: none; width: 14px; height: 16px; color: #3f3f3f; }
.step:disabled { color: #a3a3a3; }
.steps { flex: 1; display: flex; gap: 46px; padding-left: 27px; }
.total { padding-right: 8px; }
.size { display: flex; align-items: center; gap: 4px; height: 52px; padding: 0 14px 0 19px; border: solid var(--line); border-width: 0 2px; }
.page { display: flex; align-items: center; padding-left: 26px; }
.page .en { margin-left: 6px; }
.page input { width: 52px; height: 52px; border: 2px solid var(--line); padding-left: 12px; }
.page input.en { margin-left: 13px; }
.of { margin: 0 12px 0 8px; }
.compact .step { margin-right: 7px; }

.combo { position: relative; display: block; flex: none; width: 200px; height: 52px; border: 2px solid var(--line); }
.combo select { appearance: none; width: 100%; height: 100%; padding-left: 8px; }
.combo .down { position: absolute; right: 10px; top: 20px; pointer-events: none; }
.combo.small { width: 84px; background: linear-gradient(var(--line), var(--line)) 45px 0 / 2px 100% no-repeat; }

/* document */
.main { flex: 1; min-width: 0; display: flex; flex-direction: column; margin: 4px 0 4px 4px; }
.doc-tabs { display: flex; justify-content: space-between; align-items: center; height: 54px; padding-right: 6px; }
.doc-tab { display: flex; align-items: center; justify-content: space-between; width: 212px; height: 54px; padding: 0 20px 2px 24px; background: #e1e1e1; font-weight: 500; }
.doc-tab svg { width: 20px; height: 20px; color: #808080; }
.close { color: #3f3f3f; }
.doc { flex: 1; display: flex; flex-direction: column; border: 2px solid var(--line); padding: 26px 24px 24px; }
.filters { display: flex; align-items: center; margin-bottom: 18px; }
.name { width: 128px; }
.name .en { margin-left: 17px; }
.name.state { width: 83px; margin-left: 41px; }
.search { width: 300px; height: 52px; margin-left: 10px; border: 2px solid var(--line); padding-left: 10px; }
.search::placeholder { color: var(--text); opacity: 1; }
.check { display: flex; align-items: center; gap: 8px; width: 196px; margin-left: 40px; }
.check input { appearance: none; width: 26px; height: 26px; border: 2px solid var(--line); background: #fff; }
.check input:checked::before { content: ""; display: block; width: 22px; height: 22px; background: #3f3f3f; clip-path: polygon(0 48%, 10% 38%, 36% 66%, 88% 8%, 100% 16%, 38% 88%); }
.box { display: flex; align-items: center; height: 52px; border: 2px solid var(--line); padding: 0 8px; }
.find { width: 96px; margin-left: 40px; background: #e5e5e5; color: #a3a3a3; gap: 1px; }
.find svg { width: 30px; height: 30px; }
.sync { margin-left: auto; width: 240px; padding-left: 10px; gap: 3px; background: #fff; }
.sync svg { width: 26px; height: 24px; }
.empty { margin: auto 18px; height: 60px; line-height: 58px; text-align: center; background: var(--gray); border: 2px solid var(--line); border-radius: 8px; font-weight: 500; }
.scroll { display: flex; height: 32px; border: solid var(--line); border-width: 0 2px; background: var(--gray); }
.scroll button { width: 30px; display: flex; align-items: center; justify-content: center; background: #fff; border: 2px solid var(--line); border-right: 0; }
.scroll button:first-child { border-left: 0; }
.track { flex: 1; display: flex; }
.track::after { content: ""; flex: 1; }
.thumb { flex: 12; border: 2px solid var(--line); background: #fff; }

/* status bar */
.status { display: flex; height: 63px; background: var(--gray); border: solid var(--line); border-width: 4px 2px 2px 0; white-space: nowrap; }
.start { width: 51px; background: var(--blue); display: flex; align-items: center; justify-content: center; }
.start svg { width: 22px; height: 20px; }
.cell { display: flex; align-items: center; border-right: 2px solid #000; }
.cell > .en:first-of-type { white-space: pre; }
.user { width: 252px; padding-left: 12px; }
.msg { flex: 1; padding-left: 21px; }
.msg svg { width: 32px; height: 28px; margin-right: 12px; }
.cell .slash { margin: 0 10px 0 18px; }
.logoff { padding: 0 10px 0 12px; }
.extend { width: 64px; height: 48px; margin-left: 4px; border: 2px solid var(--line); background: #fff; }
.time { padding: 0 12px 0 10px; }
.settings { width: 49px; display: flex; align-items: center; justify-content: center; background: #fff; }
.settings svg { width: 32px; height: 32px; }
```
